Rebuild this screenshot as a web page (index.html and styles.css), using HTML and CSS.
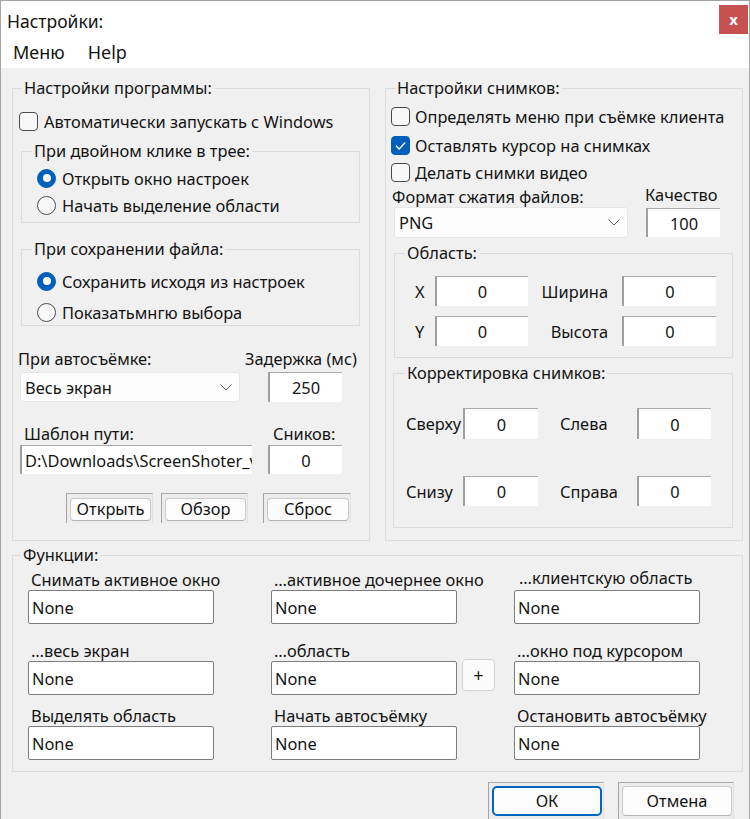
FILE: index.html
```html
<!DOCTYPE html>
<html lang="ru">
<head>
<meta charset="utf-8">
<title>Настройки</title>
<link rel="stylesheet" href="styles.css">
</head>
<body>
<div class="window">
  <div class="titlebar">
    <span class="title">Настройки:</span>
    <span class="close">x</span>
  </div>
  <div class="menubar">
    <span>Меню</span>
    <span>Help</span>
  </div>
  <div class="client">
    <div class="top">
      <div class="group g-prog">
        <div class="group-title gt-prog">Настройки программы:</div>
        <label class="check-row cr-auto"><span class="cb"></span>Автоматически запускать с Windows</label>

        <div class="group sub sub-tray">
          <div class="group-title gt-sub">При двойном клике в трее:</div>
          <div class="radio-row rr-1"><span class="rb on"></span>Открыть окно настроек</div>
          <div class="radio-row rr-2"><span class="rb"></span>Начать выделение области</div>
        </div>

        <div class="group sub sub-save">
          <div class="group-title gt-sub">При сохранении файла:</div>
          <div class="radio-row rr-3"><span class="rb on"></span>Сохранить исходя из настроек</div>
          <div class="radio-row rr-4"><span class="rb"></span>Показатьмнгю выбора</div>
        </div>

        <div class="lbl-row lr-auto">
          <span class="l-auto">При автосъёмке:</span>
          <span>Задержка (мс)</span>
        </div>
        <div class="ctl-row cr-auto2">
          <div class="combo c-auto"><span>Весь экран</span><svg class="chev" width="12" height="7" viewBox="0 0 12 7"><polyline points="0.5,0.5 6,6 11.5,0.5" fill="none" stroke="#5f5f5f" stroke-width="1"/></svg></div>
          <div class="sunken s-delay">250</div>
        </div>
        <div class="lbl-row lr-path">
          <span class="l-path">Шаблон пути:</span>
          <span>Сников:</span>
        </div>
        <div class="ctl-row cr-path">
          <div class="sunken s-path">D:\Downloads\ScreenShoter_v</div>
          <div class="sunken s-count">0</div>
        </div>
        <div class="btn-row">
          <div class="frame f-open"><div class="btn">Открыть</div></div>
          <div class="frame f-browse"><div class="btn">Обзор</div></div>
          <div class="frame f-reset"><div class="btn">Сброс</div></div>
        </div>
      </div>

      <div class="group g-snap">
        <div class="group-title gt-snap">Настройки снимков:</div>
        <label class="check-row cs-1"><span class="cb"></span>Определять меню при съёмке клиента</label>
        <label class="check-row cs-2"><span class="cb on"><svg width="17" height="17" viewBox="0 0 17 17"><polyline points="4,8.8 7.2,12 13.2,5.5" fill="none" stroke="#fff" stroke-width="1.3"/></svg></span>Оставлять курсор на снимках</label>
        <label class="check-row cs-3"><span class="cb"></span>Делать снимки видео</label>
        <div class="lbl-row lr-fmt">
          <span class="l-fmt">Формат сжатия файлов:</span>
          <span class="l-q">Качество</span>
        </div>
        <div class="ctl-row cr-fmt">
          <div class="combo c-fmt"><span>PNG</span><svg class="chev" width="12" height="7" viewBox="0 0 12 7"><polyline points="0.5,0.5 6,6 11.5,0.5" fill="none" stroke="#5f5f5f" stroke-width="1"/></svg></div>
          <div class="sunken s-q">100</div>
        </div>

        <div class="group sub sub-area">
          <div class="group-title gt-area">Область:</div>
          <div class="area-grid ag-1">
            <span class="al1">X</span><div class="sunken">0</div>
            <span class="al2">Ширина</span><div class="sunken">0</div>
          </div>
          <div class="area-grid ag-2">
            <span class="al1">Y</span><div class="sunken">0</div>
            <span class="al2">Высота</span><div class="sunken">0</div>
          </div>
        </div>

        <div class="group sub sub-corr">
          <div class="group-title gt-corr">Корректировка снимков:</div>
          <div class="corr-grid cg-1">
            <span class="cl1">Сверху</span><div class="sunken">0</div>
            <span class="cl2">Слева</span><div class="sunken">0</div>
          </div>
          <div class="corr-grid cg-2">
            <span class="cl1">Снизу</span><div class="sunken">0</div>
            <span class="cl2">Справа</span><div class="sunken">0</div>
          </div>
        </div>
      </div>
    </div>

    <div class="group g-func">
      <div class="group-title gt-func">Функции:</div>
      <div class="frow fr-1">
        <div class="fcell"><div class="flabel">Снимать активное окно</div><div class="hotkey">None</div></div>
        <div class="fcell"><div class="flabel">…активное дочернее окно</div><div class="hotkey">None</div></div>
        <div class="fcell"><div class="flabel fl-up">…клиентскую область</div><div class="hotkey">None</div></div>
      </div>
      <div class="frow fr-2">
        <div class="fcell"><div class="flabel">…весь экран</div><div class="hotkey">None</div></div>
        <div class="fcell"><div class="flabel">…область</div><div class="hk-wrap"><div class="hotkey">None</div><div class="plus">+</div></div></div>
        <div class="fcell"><div class="flabel">…окно под курсором</div><div class="hotkey">None</div></div>
      </div>
      <div class="frow fr-3">
        <div class="fcell"><div class="flabel">Выделять область</div><div class="hotkey">None</div></div>
        <div class="fcell"><div class="flabel">Начать автосъёмку</div><div class="hotkey">None</div></div>
        <div class="fcell"><div class="flabel">Остановить автосъёмку</div><div class="hotkey">None</div></div>
      </div>
    </div>

    <div class="footer">
      <div class="frame f-ok"><div class="btn btn-default">ОК</div></div>
      <div class="frame f-cancel"><div class="btn">Отмена</div></div>
    </div>
  </div>
</div>
</body>
</html>
```
FILE: styles.css
```css
* { box-sizing: border-box; }
body {
  margin: 0;
  background: #fff;
  font-family: "Noto Sans", "Open Sans", sans-serif;
  font-size: 16.4px;
  color: #141414;
}
.window {
  width: 750px;
  height: 819px;
  border: 1px solid #a4a4a4;
  border-bottom: none;
  display: flex;
  flex-direction: column;
  overflow: hidden;
  background: #fff;
}
.titlebar {
  flex: none;
  height: 35px;
  display: flex;
  align-items: flex-start;
  padding-left: 6px;
}
.title { flex: 1; font-size: 17.5px; line-height: 20px; margin-top: 10px; }
.close {
  width: 29px; height: 29px;
  margin-top: 4px; margin-right: 1px;
  background: #c75050; color: #fff;
  font-weight: bold; font-size: 15px;
  display: flex; align-items: center; justify-content: center;
  line-height: 1;
}
.menubar {
  flex: none;
  height: 32px;
  display: flex;
  align-items: center;
  padding-left: 12px;
  gap: 23px;
  font-size: 18px;
}
.client {
  flex: none;
  height: 751px;
  background: #f0f0f0;
  padding: 20px 0 0 11px;
  display: flex;
  flex-direction: column;
}
.top { display: flex; gap: 15px; flex: none; }
.group { border: 1px solid #dcdcdc; flex: none; }
.group-title {
  width: fit-content;
  height: 20px;
  line-height: 20px;
  margin-top: -11px;
  padding: 0 2px;
  background: #f0f0f0;
  white-space: nowrap;
}
.g-prog { width: 358px; height: 453px; }
.g-snap { width: 358px; height: 453px; }
.gt-prog { margin-left: 9px; }
.gt-snap { margin-left: 9px; }

.check-row, .radio-row {
  display: flex; align-items: center;
  height: 22px; gap: 6px; white-space: nowrap;
}
.cb {
  width: 19px; height: 19px; flex: none;
  border: 1px solid #4a4a4a; border-radius: 4px;
  background: #f8f8f8;
  display: flex; align-items: center; justify-content: center;
}
.cb.on { background: #005fb8; border-color: #005fb8; }
.rb {
  width: 19px; height: 19px; flex: none;
  border: 1px solid #4a4a4a; border-radius: 50%;
  background: #f8f8f8;
  display: flex; align-items: center; justify-content: center;
}
.rb.on { background: #005fb8; border-color: #005fb8; }
.rb.on::after {
  content: ""; width: 8px; height: 8px; border-radius: 50%; background: #fff;
}
.cr-auto { margin: 12px 0 0 6px; }

.sub { margin: 0 9px 0 8px; }
.gt-sub { margin-left: 10px; }
.sub-tray { margin-top: 19px; height: 72px; }
.sub-save { margin-top: 26px; height: 77px; }
.radio-row { padding-left: 15px; }
.rr-1 { margin-top: 6px; }
.rr-2 { margin-top: 5px; }
.rr-3 { margin-top: 11px; }
.rr-4 { margin-top: 9px; }

.lbl-row { display: flex; height: 20px; line-height: 20px; white-space: nowrap; }
.lr-auto { margin-top: 23px; padding-left: 5px; }
.l-auto { width: 227px; }
.lr-path { margin-top: 22px; padding-left: 11px; }
.l-path { width: 249px; }
.ctl-row { display: flex; align-items: center; }
.cr-auto2 { margin-top: 3px; height: 30px; padding-left: 7px; gap: 28px; }
.cr-path { margin-top: 1px; height: 29px; padding-left: 7px; gap: 16px; }

.combo {
  height: 30px;
  background: #fdfdfd;
  border: 1px solid #e6e6e6;
  border-radius: 3px;
  display: flex; align-items: center; justify-content: space-between;
  padding: 0 7px 0 4px;
}
.c-auto { width: 220px; }
.chev { flex: none; }
.sunken {
  background: #fff;
  border-top: 1px solid #a9a9a9;
  border-left: 2px solid #9f9f9f;
  display: flex; align-items: center; justify-content: center;
  white-space: nowrap; overflow: hidden;
}
.s-delay { width: 74px; height: 30px; }
.s-path { width: 232px; height: 29px; justify-content: flex-start; padding-left: 3px; }
.s-count { width: 74px; height: 29px; }

.btn-row { display: flex; margin: 19px 0 0 53px; height: 30px; }
.frame {
  height: 30px;
  border-top: 1px solid #adadad;
  border-left: 1px solid #a3a3a3;
  border-right: 1px solid #e2e2e2;
  padding: 4px 1px 2px 3px;
  background: #ececec;
}
.f-open { width: 87px; }
.f-browse { width: 87px; margin-left: 8px; }
.f-reset { width: 88px; margin-left: 15px; }
.btn {
  height: 100%;
  border: 1px solid #c9c9c9;
  border-bottom-color: #b4b4b4;
  border-radius: 4px;
  background: #fcfcfc;
  display: flex; align-items: center; justify-content: center;
  line-height: 1;
}

.cs-1 { margin: 7px 0 0 5px; gap: 5px; }
.cs-2 { margin: 7px 0 0 5px; gap: 5px; }
.cs-3 { margin: 5px 0 0 5px; gap: 5px; }
.lr-fmt { margin-top: 4px; padding-left: 6px; }
.l-fmt { width: 253px; }
.l-q { margin-top: -2px; }
.cr-fmt { height: 31px; padding-left: 8px; gap: 18px; }
.c-fmt { width: 234px; height: 31px; }
.s-q { width: 74px; height: 29px; }

.sub-area { margin: 15px 9px 0 8px; height: 105px; }
.gt-area { margin-left: 10px; }
.area-grid {
  display: grid;
  grid-template-columns: 40px 93px 94px 94px;
  height: 30px;
  align-items: center;
}
.area-grid .sunken { height: 30px; }
.al1 { padding-left: 20px; }
.al2 { text-align: right; padding-right: 14px; }
.ag-1 { margin-top: 13px; }
.ag-2 { margin-top: 10px; }

.sub-corr { margin: 15px 9px 0 7px; height: 155px; }
.gt-corr { margin-left: 11px; }
.corr-grid {
  display: grid;
  grid-template-columns: 69px 75px 99px 74px;
  align-items: center;
  white-space: nowrap;
}
.corr-grid .sunken { height: 100%; }
.cg-1 { margin-top: 25px; height: 31px; }
.cg-2 { margin-top: 37px; height: 30px; }
.cl1 { padding-left: 12px; }
.cl2 { padding-left: 22px; }

.g-func { width: 731px; height: 217px; margin-top: 14px; }
.gt-func { margin-left: 8px; }
.frow {
  display: grid;
  grid-template-columns: 186px 186px 186px;
  column-gap: 57px;
  padding-left: 15px;
}
.fr-1 { margin-top: 5px; }
.fr-2 { margin-top: 17px; }
.fr-3 { margin-top: 11px; }
.flabel { height: 20px; line-height: 20px; padding-left: 3px; white-space: nowrap; }
.fl-up { margin-top: -2px; margin-bottom: 2px; padding-left: 5px; }
.hotkey {
  width: 186px; height: 34px;
  background: #fff;
  border: 1px solid #7d7d7d;
  border-radius: 2px;
  padding-left: 3px;
  display: flex; align-items: center;
}
.hk-wrap { display: flex; gap: 5px; align-items: flex-start; }
.hk-wrap .hotkey { flex: none; }
.plus {
  flex: none;
  width: 33px; height: 32px; margin-top: -2px;
  border: 1px solid #d3d3d3; border-radius: 4px;
  background: #fbfbfb;
  display: flex; align-items: center; justify-content: center;
  font-size: 18px;
}

.footer {
  flex: none;
  display: flex;
  justify-content: flex-end;
  gap: 14px;
  margin-top: 10px;
  padding-right: 15px;
}
.f-ok, .f-cancel { width: 116px; height: 40px; padding: 3px 1px 6px 3px; }
.btn-default { border: 2px solid #0067c0; border-radius: 5px; }
```
